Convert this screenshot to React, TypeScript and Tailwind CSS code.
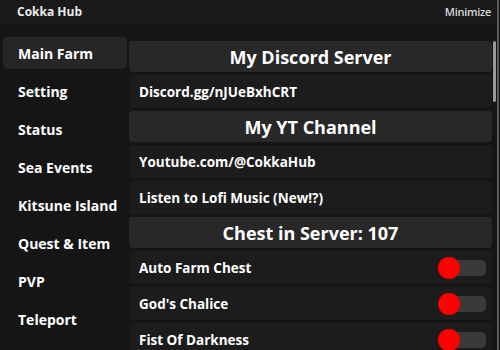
import React, { useState } from 'react';

const tabs = ['Main Farm', 'Setting', 'Status', 'Sea Events', 'Kitsune Island', 'Quest & Item', 'PVP', 'Teleport'];

type Item =
  | { kind: 'header'; text: string }
  | { kind: 'label'; text: string }
  | { kind: 'toggle'; text: string };

const items: Item[] = [
  { kind: 'header', text: 'My Discord Server' },
  { kind: 'label', text: 'Discord.gg/nJUeBxhCRT' },
  { kind: 'header', text: 'My YT Channel' },
  { kind: 'label', text: 'Youtube.com/@CokkaHub' },
  { kind: 'label', text: 'Listen to Lofi Music (New!?)' },
  { kind: 'header', text: 'Chest in Server: 107' },
  { kind: 'toggle', text: 'Auto Farm Chest' },
  { kind: 'toggle', text: "God's Chalice" },
  { kind: 'toggle', text: 'Fist Of Darkness' },
];

function Toggle({ on, onClick }: { on: boolean; onClick: () => void }) {
  return (
    <button onClick={onClick} className="relative w-[48px] h-[22px] flex items-center">
      <span className="absolute right-0 w-[38px] h-[16px] rounded-[5px] bg-[#3a3a3a]" />
      <span className={`absolute w-[22px] h-[22px] rounded-full bg-[#ff0000] ${on ? 'right-0' : 'left-0'}`} />
    </button>
  );
}

export default function App() {
  const [tab, setTab] = useState('Main Farm');
  const [toggles, setToggles] = useState<Record<string, boolean>>({});

  return (
    <div className="w-[500px] h-[350px] bg-[#101010] overflow-hidden" style={{ fontFamily: '"Open Sans", "Liberation Sans", sans-serif' }}>
      <div className="w-[499px] h-[350px] bg-[#151515] border-r-2 border-[#5a5a5a] flex flex-col">
        <div className="h-[24px] shrink-0 bg-[#1a1a1a] flex items-center justify-between pl-[17px] pr-[6px]">
          <span className="text-[12px] font-bold text-[#ececec]">Cokka Hub</span>
          <span className="text-[11px] font-semibold text-[#d8d8d8] tracking-tight">Minimize</span>
        </div>

        <div className="flex flex-1 min-h-0 pt-[13px]">
          <div className="w-[129px] shrink-0 pl-[3px] pr-[2px] flex flex-col gap-[6px]">
            {tabs.map(t => (
              <button
                key={t}
                onClick={() => setTab(t)}
                className={`h-[32px] shrink-0 rounded-[5px] pl-[15px] text-left text-[14px] font-bold text-white ${tab === t ? 'bg-[#262626]' : ''}`}
              >
                {t}
              </button>
            ))}
          </div>

          <div className="flex-1 min-w-0 flex pt-[4px]">
            <div className="flex-1 min-w-0 flex flex-col gap-[3px]">
              {items.map(it => {
                if (it.kind === 'header') {
                  return (
                    <div key={it.text} className="h-[31px] shrink-0 rounded-[4px] bg-[#282828] flex items-center justify-center pt-[2px] text-[18px] font-bold text-white">
                      {it.text}
                    </div>
                  );
                }
                return (
                  <div key={it.text} className="h-[33px] shrink-0 rounded-[4px] bg-[#1c1c1c] flex items-center justify-between pl-[10px] pr-[6px] text-[13.5px] font-bold text-white">
                    <span className="pt-[2px]">{it.text}</span>
                    {it.kind === 'toggle' && (
                      <Toggle on={!!toggles[it.text]} onClick={() => setToggles({ ...toggles, [it.text]: !toggles[it.text] })} />
                    )}
                  </div>
                );
              })}
            </div>
            <div className="w-[5px] shrink-0 pl-[1px] pr-[1px]">
              <div className="h-[61px] w-[3px] bg-[#9a9a9a] rounded-full" />
            </div>
          </div>
        </div>
      </div>
    </div>
  );
}
